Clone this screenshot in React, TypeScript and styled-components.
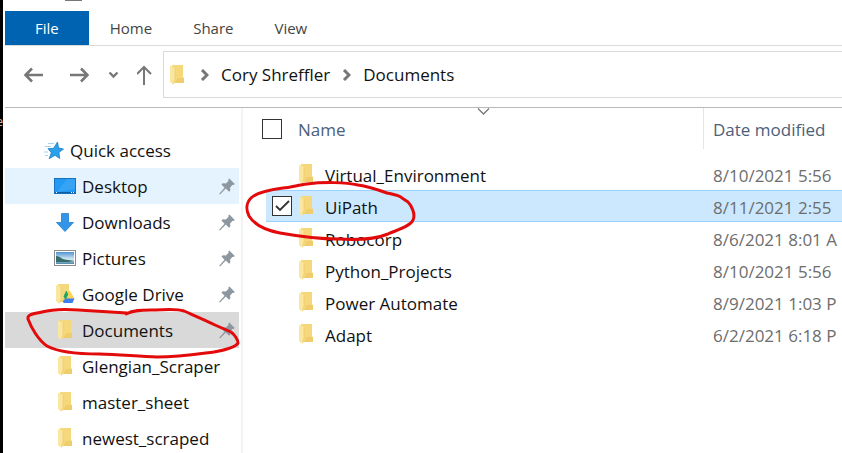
import React from "react";
import styled, { createGlobalStyle } from "styled-components";

const GlobalStyle = createGlobalStyle`
  * { box-sizing: border-box; }
  body {
    margin: 0;
    background: #fff;
    color: #111;
    font-family: "Open Sans", "Noto Sans", sans-serif;
    font-size: 17px;
    line-height: 24px;
  }
  button { font: inherit; border: 0; background: none; padding: 0; color: inherit; }
  a { color: inherit; text-decoration: none; }
  svg { display: block; flex: none; }
`;

const Screen = styled.div`
  position: relative;
  display: flex;
  height: 100vh;
  overflow: hidden;
`;

const DesktopStrip = styled.div`
  flex: none;
  width: 3px;
  margin-right: 2px;
  padding-top: 114px;
  overflow: hidden;
  background: #000;
  color: #d9b8a8;
  font-size: 12px;
  line-height: 16px;
  direction: rtl;
  white-space: nowrap;
`;

const Explorer = styled.div`
  flex: 1;
  min-width: 0;
  display: flex;
  flex-direction: column;
`;

const TitleBar = styled.div`
  flex: none;
  height: 11px;
  padding-left: 60px;
`;

const TabBar = styled.nav`
  flex: none;
  display: flex;
  gap: 1px;
  height: 35px;
  border-bottom: 1px solid #dadbdc;
  font-size: 15px;
`;

const Tab = styled.button<{ $primary?: boolean }>`
  height: 34px;
  padding: 0 ${(p) => (p.$primary ? 30 : 20)}px;
  background: ${(p) => (p.$primary ? "#0063b1" : "transparent")};
  color: ${(p) => (p.$primary ? "#fff" : "#444")};
`;

const Toolbar = styled.div`
  flex: none;
  display: flex;
  align-items: center;
  height: 62px;
  padding-bottom: 4px;
  border-bottom: 1px solid #b8b8b8;
`;

const NavButtons = styled.div`
  display: flex;
  align-items: center;
  gap: 16px;
  width: 158px;
  padding-left: 18px;
`;

const NavButton = styled.button`
  display: flex;
`;

const AddressBar = styled.div`
  flex: 1;
  display: flex;
  align-items: center;
  height: 47px;
  padding-left: 6px;
  border: 1px solid #d9d9d9;
  border-right: 0;
`;

const Crumb = styled.a`
  margin: 0 12px;
`;

const CrumbFolder = styled.span`
  margin-right: 16px;
`;

const Panes = styled.div`
  flex: 1;
  min-height: 0;
  display: flex;
`;

const Sidebar = styled.nav`
  flex: none;
  width: 238px;
  padding: 24px 2px 0 0;
  border-right: 2px solid #f3f3f3;
`;

const SideItem = styled.a<{ $tone?: "hover" | "current"; $root?: boolean }>`
  display: flex;
  align-items: center;
  height: 36px;
  padding: 0 4px 0 ${(p) => (p.$root ? 38 : 48)}px;
  background: ${(p) =>
    p.$tone === "hover" ? "#e5f3ff" : p.$tone === "current" ? "#d9d9d9" : "transparent"};
`;

const SideIcon = styled.span<{ $root?: boolean }>`
  display: flex;
  justify-content: center;
  width: ${(p) => (p.$root ? 22 : 24)}px;
  margin-right: 5px;
`;

const SideLabel = styled.span`
  flex: 1;
  padding-top: 2px;
  white-space: nowrap;
`;

const Content = styled.main`
  flex: 1;
  min-width: 0;
`;

const FileTable = styled.table`
  width: 100%;
  table-layout: fixed;
  border-collapse: separate;
  border-spacing: 0;
`;

const CheckCol = styled.col<{ $width: number }>`
  width: ${(p) => p.$width}px;
`;

const HeadRow = styled.tr`
  height: 41px;
  color: #4c607a;
`;

const HeadCell = styled.th<{ $divided?: boolean; $indent: number }>`
  position: relative;
  padding: 0 0 0 ${(p) => p.$indent}px;
  border-left: ${(p) => (p.$divided ? "1px solid #e5e5e5" : "0")};
  font-weight: 400;
  text-align: left;
  white-space: nowrap;
`;

const HeadLabel = styled.span`
  display: block;
  padding-top: 2px;
`;

const SortMark = styled.span`
  position: absolute;
  top: 0;
  left: calc(50% - 24px);
`;

const Spacer = styled.tr`
  height: 9px;
`;

const FileRow = styled.tr<{ $selected?: boolean }>`
  height: 32px;
  td + td {
    background: ${(p) => (p.$selected ? "#cce8ff" : "transparent")};
    box-shadow: ${(p) => (p.$selected ? "inset 0 1px #99d1ff, inset 0 -1px #99d1ff" : "none")};
  }
`;

const Cell = styled.td<{ $indent?: number; $muted?: boolean }>`
  padding: 0 0 0 ${(p) => p.$indent ?? 0}px;
  color: ${(p) => (p.$muted ? "#6d6d6d" : "inherit")};
  white-space: nowrap;
`;

const FileName = styled.span`
  display: flex;
  align-items: center;
  gap: 12px;
`;

const CellText = styled.span`
  display: block;
  padding-top: 4px;
`;

const Check = styled.input`
  appearance: none;
  display: block;
  width: 20px;
  height: 20px;
  margin: 0;
  border: 1px solid #333;
  background: #fff;
  &:checked {
    background: #fff
      url("data:image/svg+xml,%3Csvg xmlns='http://www.w3.org/2000/svg' viewBox='0 0 18 18'%3E%3Cpath d='M3 9l4 4 9-9' fill='none' stroke='%23333' stroke-width='1.8'/%3E%3C/svg%3E");
  }
`;

const Markup = styled.svg`
  position: absolute;
  top: 0;
  left: 0;
  pointer-events: none;
`;

const Folder = ({ drive }: { drive?: boolean }) => (
  <svg width={drive ? 19 : 14} height="20" viewBox={drive ? "0 0 19 20" : "0 0 14 20"}>
    <path d="M2 0h11v12l1 1v5H2z" fill="#f6d87c" />
    <path d="M8 13h6v5H5z" fill="#f0cd6c" />
    <path d="M0 1h1l4 2v11l-1.500 6L0 17z" fill="#fbe6a0" />
    <path d="M5 3v11l-1.500 5" fill="none" stroke="#e9c766" strokeWidth=".6" />
    {drive && (
      <>
        <path d="M10 7h4L9.500 16 7.500 12.500z" fill="#22a464" />
        <path d="M10.500 7h3.500l4.500 8h-4z" fill="#fcd34b" />
        <path d="M9.500 14.500h9L16.500 19h-9L7 17z" fill="#3d7ff0" />
      </>
    )}
  </svg>
);

const Pin = () => (
  <svg width="16" height="17" viewBox="0 0 16 17">
    <path
      d="M10.300.5L15.800 6l-1.200 1-1-.2-2.500 2.600.2 3.200-1.200 1.100-3.300-3.200L1 16.500l-.8-.8 5.300-6L2.500 6.500l1.200-1.200 3.200.2 2.700-2.800-.3-1.100z"
      fill="#8d979f"
    />
  </svg>
);

const Star = () => (
  <svg width="20" height="19" viewBox="0 0 20 19">
    <path
      d="M13.500 1l1 5.800 5 1.300-4.500 3.200.6 6.200-4.600-3.200-5.800 3.400 2.100-6-3.300-4 5.600-.4z"
      fill="#2ba0ea"
      stroke="#1b80c9"
      strokeWidth=".8"
    />
    <path d="M4 2.500h6M1 5.500h6M0 11h4M1 14.500h3" stroke="#8ccaef" strokeWidth=".8" />
  </svg>
);

const DesktopIcon = () => (
  <svg width="22" height="16" viewBox="0 0 22 16">
    <rect x=".5" y=".5" width="21" height="15" fill="#2299f2" stroke="#1672bd" />
    <path d="M13 1h8v10L3 14z" fill="#48abf6" opacity=".55" />
    <path d="M1 14.500h20" stroke="#0b5fa5" />
    <path d="M2 14.500h1M17 14.500h1M19 14.500h1" stroke="#fff" />
  </svg>
);

const DownloadIcon = () => (
  <svg width="18" height="19" viewBox="0 0 18 19">
    <path d="M5.500.5h7v9h5L9 18.500.5 9.500h5z" fill="#3295e8" stroke="#2580cf" strokeWidth=".8" />
  </svg>
);

const PictureIcon = () => (
  <svg width="22" height="16" viewBox="0 0 22 16">
    <defs>
      <linearGradient id="sky" x1="0" y1="0" x2="0" y2="1">
        <stop offset="0" stopColor="#4f93cf" />
        <stop offset=".6" stopColor="#d4e9f5" />
        <stop offset="1" stopColor="#4b85a8" />
      </linearGradient>
    </defs>
    <rect x=".5" y=".5" width="21" height="15" fill="#fff" stroke="#8c8c8c" />
    <rect x="2" y="2" width="18" height="12" fill="url(#sky)" />
    <path d="M2 6c4 0 5 3 9 3.500s6 1 9 1.500l-6 1H2z" fill="#356b68" />
  </svg>
);

const Line = ({ w, h, d, s = 2 }: { w: number; h: number; d: string; s?: number }) => (
  <svg width={w} height={h} viewBox={`0 0 ${w} ${h}`}>
    <path d={d} fill="none" stroke="#777" strokeWidth={s} />
  </svg>
);

const CrumbChevron = () => <Line w={9} h={12} d="M2 1l5 5-5 5" s={3} />;

type Place = { label: string; icon: React.ReactNode; pinned?: boolean; tone?: "hover" | "current" };

const places: Place[] = [
  { label: "Desktop", icon: <DesktopIcon />, pinned: true, tone: "hover" },
  { label: "Downloads", icon: <DownloadIcon />, pinned: true },
  { label: "Pictures", icon: <PictureIcon />, pinned: true },
  { label: "Google Drive", icon: <Folder drive />, pinned: true },
  { label: "Documents", icon: <Folder />, pinned: true, tone: "current" },
  { label: "Glengian_Scraper", icon: <Folder /> },
  { label: "master_sheet", icon: <Folder /> },
  { label: "newest_scraped", icon: <Folder /> },
];

const files = [
  { name: "Virtual_Environment", date: "8/10/2021 5:56" },
  { name: "UiPath", date: "8/11/2021 2:55", selected: true },
  { name: "Robocorp", date: "8/6/2021 8:01 A" },
  { name: "Python_Projects", date: "8/10/2021 5:56" },
  { name: "Power Automate", date: "8/9/2021 1:03 P" },
  { name: "Adapt", date: "6/2/2021 6:18 P" },
];

export default function App() {
  return (
    <Screen>
      <GlobalStyle />
      <DesktopStrip>Re</DesktopStrip>
      <Explorer>
        <TitleBar>
          <svg width="17" height="1" viewBox="0 0 17 1">
            <path d="M0 .5h17" stroke="#777" />
          </svg>
        </TitleBar>
        <TabBar>
          <Tab $primary>File</Tab>
          <Tab>Home</Tab>
          <Tab>Share</Tab>
          <Tab>View</Tab>
        </TabBar>
        <Toolbar>
          <NavButtons>
            <NavButton aria-label="Back">
              <Line w={20} h={16} d="M20 8H2.500M9 1.500L2.500 8 9 14.500" s={2.6} />
            </NavButton>
            <NavButton aria-label="Forward">
              <Line w={30} h={16} d="M11 8h17.500M22 1.500L28.500 8 22 14.500" s={2.6} />
            </NavButton>
            <NavButton aria-label="Recent locations">
              <Line w={16} h={8} d="M4.500 1.500L8.500 5.500l4-4" s={2.4} />
            </NavButton>
            <NavButton aria-label="Up">
              <Line w={16} h={20} d="M7 20V2M0 9l7-7 7 7" s={2} />
            </NavButton>
          </NavButtons>
          <AddressBar>
            <CrumbFolder>
              <Folder />
            </CrumbFolder>
            <CrumbChevron />
            <Crumb href="#user">Cory Shreffler</Crumb>
            <CrumbChevron />
            <Crumb href="#documents">Documents</Crumb>
          </AddressBar>
        </Toolbar>
        <Panes>
          <Sidebar>
            <SideItem href="#quick" $root>
              <SideIcon $root>
                <Star />
              </SideIcon>
              <SideLabel>Quick access</SideLabel>
            </SideItem>
            {places.map((p) => (
              <SideItem key={p.label} href={`#${p.label}`} $tone={p.tone}>
                <SideIcon>{p.icon}</SideIcon>
                <SideLabel>{p.label}</SideLabel>
                {p.pinned && <Pin />}
              </SideItem>
            ))}
          </Sidebar>
          <Content>
            <FileTable>
              <colgroup>
                <CheckCol $width={23} />
                <CheckCol $width={32} />
                <col />
                <CheckCol $width={139} />
              </colgroup>
              <thead>
                <HeadRow>
                  <HeadCell colSpan={2} $indent={19}>
                    <Check type="checkbox" aria-label="Select all" />
                  </HeadCell>
                  <HeadCell $indent={0}>
                    <HeadLabel>Name</HeadLabel>
                    <SortMark>
                      <Line w={13} h={7} d="M1 .5l5.500 5.500L12 .5" s={1.3} />
                    </SortMark>
                  </HeadCell>
                  <HeadCell $indent={9} $divided>
                    <HeadLabel>Date modified</HeadLabel>
                  </HeadCell>
                </HeadRow>
              </thead>
              <tbody>
                <Spacer />
                {files.map((f) => (
                  <FileRow key={f.name} $selected={f.selected}>
                    <Cell />
                    <Cell $indent={6}>
                      {f.selected && (
                        <Check type="checkbox" defaultChecked aria-label={`Select ${f.name}`} />
                      )}
                    </Cell>
                    <Cell $indent={1}>
                      <FileName>
                        <Folder />
                        <CellText>{f.name}</CellText>
                      </FileName>
                    </Cell>
                    <Cell $indent={10} $muted>
                      <CellText>{f.date}</CellText>
                    </Cell>
                  </FileRow>
                ))}
              </tbody>
            </FileTable>
          </Content>
        </Panes>
      </Explorer>
      <Markup width="430" height="370" viewBox="0 0 430 370" fill="none" stroke="#e20a0a" strokeWidth="3" strokeLinecap="round" strokeLinejoin="round">
        <path d="M283 188C268 190 256 193 251 198C246 203 246 210 249 216C254 224 264 230 280 233C297 236 317 239 338 239C355 240 376 239 388 234C397 230 411 226 413 220C416 214 411 205 408 202L402 198C401 196 396 195 387 193C376 189 366 186 358 185C346 182 322 182 307 184C298 185 290 188 283 188" />
        <path d="M28 319C27 314 34 314 42 312C53 309 66 309 78 310L127 313L126 314C133 310 142 310 151 310C164 310 175 308 184 311C193 315 205 320 215 325L231 332C235 335 238 340 238 343C236 347 225 350 214 352C198 354 180 357 157 357C139 357 120 354 99 354C78 354 58 352 47 346C38 340 31 327 28 319" />
      </Markup>
    </Screen>
  );
}
